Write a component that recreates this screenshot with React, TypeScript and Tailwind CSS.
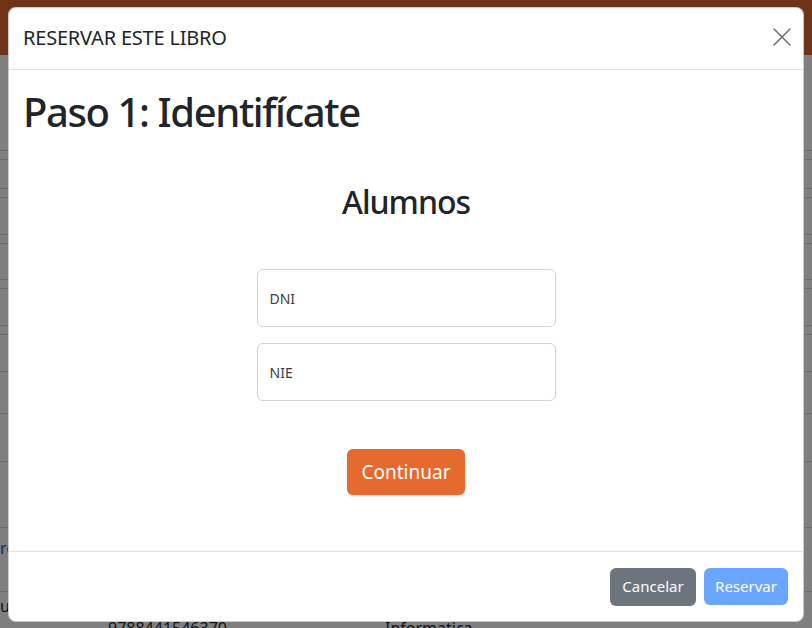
import { X } from 'lucide-react';

const rows = [
  'h-[96px]',
  'h-[9px]',
  'h-[29px]',
  'h-[9px]',
  'h-[37px]',
  'h-[9px]',
  'h-[36px]',
  'h-[9px]',
  'h-[37px]',
  'h-[9px]',
  'h-[37px]',
  'h-[42px]',
  'h-[48px]',
  'h-[66px]',
];

function BackgroundPage() {
  return (
    <div className="flex flex-col">
      <div className="h-[55px] bg-[#de682e]" />
      {rows.map((h, i) => (
        <div key={i} className={`${h} border-b border-[#d4d6d8]`} />
      ))}
      <div className="h-[64px] border-b border-[#d4d6d8] pt-[8px] text-[#0a58ca] text-base">
        <span>re</span>
      </div>
      <div className="h-[60px] relative text-[#212529] text-base">
        <span className="absolute left-0 top-[2px]">u</span>
        <span className="absolute left-[108px] top-[24px]">9788441546370</span>
        <span className="absolute left-[385px] top-[24px]">Informatica</span>
      </div>
    </div>
  );
}

export default function App() {
  return (
    <div
      className="relative w-[812px] h-[628px] overflow-hidden bg-white"
      style={{ fontFamily: '"Noto Sans", "Open Sans", sans-serif' }}
    >
      <BackgroundPage />
      <div className="absolute inset-0 bg-black/50" />

      <div className="absolute left-2 top-[7px] w-[796px] bg-white rounded-lg border border-black/20 text-[#212529] flex flex-col">
        <div className="h-[62px] pl-[14px] pr-[15px] flex items-center justify-between border-b border-[#dee2e6]">
          <h5 className="text-[20px] font-normal tracking-[-0.2px] mt-[-2px]">RESERVAR ESTE LIBRO</h5>
          <button className="w-8 h-8 flex items-center justify-center text-[#6c6c6c] mr-[-10px] mt-[-4px]">
            <X size={32} strokeWidth={1.1} />
          </button>
        </div>

        <div className="h-[481px] px-[15px] pt-[18px] flex flex-col">
          <h1 className="-ml-px text-[40px] leading-[48px] font-medium tracking-[-1.4px]">Paso 1: Identifícate</h1>
          <div className="flex flex-col items-center">
            <h2 className="mt-[47px] text-[32px] leading-[38px] font-medium tracking-[-1px]">Alumnos</h2>
            <div className="mt-[48px] w-[299px] flex flex-col gap-4">
              <div className="h-[58px] border border-[#ced4da] rounded-md flex items-center px-3 text-[14px] text-[#3a3d40]">
                DNI
              </div>
              <div className="h-[58px] border border-[#ced4da] rounded-md flex items-center px-3 text-[14px] text-[#3a3d40]">
                NIE
              </div>
            </div>
            <button className="mt-[48px] w-[118px] h-[46px] rounded-md bg-[#e6692e] text-white text-[19px] shadow-sm">
              Continuar
            </button>
          </div>
        </div>

        <div className="h-[70px] border-t border-[#dee2e6] px-[15px] flex items-center justify-end gap-2">
          <button className="w-[86px] h-[38px] rounded-md bg-[#6c757d] text-white text-[15px]">Cancelar</button>
          <button className="w-[84px] h-[37px] rounded-md bg-[#6aa6fe] text-white text-[15px]">Reservar</button>
        </div>
      </div>
    </div>
  );
}
